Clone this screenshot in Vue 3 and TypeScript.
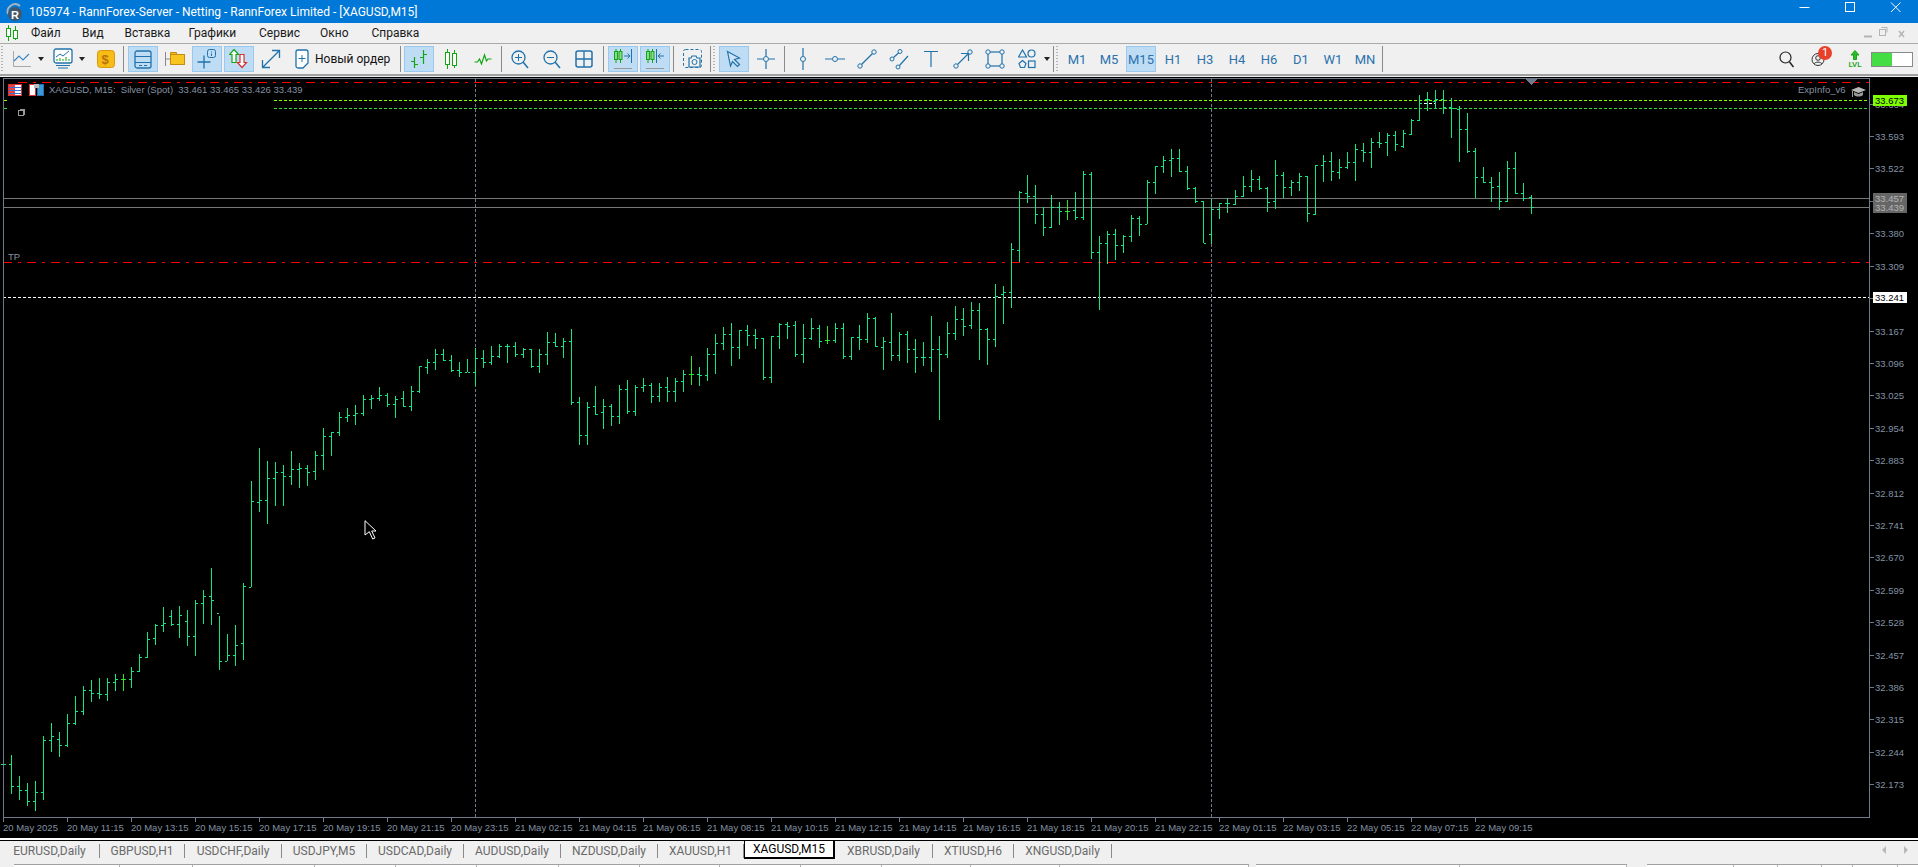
<script setup lang="ts">
type Row = number[];
interface Seg { x0: number; y0: number; rows: Row[] }

const segs: Seg[] = [
  { x0: 3, y0: 620, rows: [
    [405,520,433,433],[405,522,433,499],[468,540,499,511],[489,558,511,544],[483,573,544,517],[348,540,517,361],[309,396,361,349],[336,411,358,376],[282,381,376,310],[228,315,310,274],[198,285,274,211],[180,246,211,220],[174,237,220,223],[174,243,223,187],[162,213,187,178],[162,213,178,178,1],[141,204,178,154],[102,156,154,112],[36,114,112,58],[12,75,55,16],
    [-39,36,16,10],[-30,20,-10,13],[-40,56,13,-15],[-30,80,4,49],[-60,108,49,-50],[-90,12,-50,-70],[-155,15,-70,-60],[-10,150,-20,124],[42,124,124,106],[15,138,106,76],[-110,120,70,-100]
  ] },
  { x0: 251, y0: 430, rows: [
    [153,471,471,214],[54,246,217,211],[93,282,211,145],[96,228,145,127],[105,228,127,139],[63,165,139,118],[99,174,118,115],[105,168,115,127],[63,150,124,76]
  ] },
  { x0: 323, y0: 330, rows: [
    [294,420,376,319],[307,378,319,307],[246,320,307,262],[234,276,262,256],[225,285,256,250],[195,258,250,208],[195,237,208,205],[171,213,205,196],[189,231,196,223],[198,264,223,208],[183,231,205,229],[168,243,229,184],[108,189,184,108],[87,132,112,97],[57,120,97,73],[57,93,73,91],[75,126,91,121],[96,141,121,127],[87,127,127,127],[54,168,127,85],[60,114,85,97],[48,105,97,79],[42,84,79,49],[42,99,49,49],[36,81,49,73],[54,84,73,58],[57,114,58,109],[57,129,109,73],[6,105,73,37],[9,51,37,49],[24,84,49,34],[-3,225,34,217],[201,345,217,316],[216,345,316,232],[168,255,229,253],[207,297,247,229],[222,288,229,259],[165,282,259,178],[150,252,178,244],[165,258,244,172]
  ] },
  { x0: 643, y0: 280, rows: [
    [294,336,322,316],[309,369,316,349],[309,366,349,322],[291,366,322,334],[294,366,334,304],[270,336,304,283],[228,315,283,283,1],[261,318,283,286],[204,303,286,223],[162,282,223,190],[141,210,190,163],[129,258,163,202],[151,237,202,151],[135,198,151,166],[147,207,166,175],[175,300,175,292],[168,309,292,169],[129,207,169,133],[126,177,133,139],[123,231,136,223],[132,249,223,175],[114,180,175,145],[135,204,145,184],[138,192,181,181,1],[129,189,181,145],[129,237,145,229],[172,240,229,172],[135,210,172,178],[99,189,178,115],[111,201,115,199],[171,270,202,184],[99,243,187,226],[156,243,226,163],[153,249,163,208],[177,279,208,232],[186,258,232,232],[108,276,232,208],[168,420,208,223],[126,234,223,160],[78,180,160,118],[84,168,118,139],[66,147,136,91],[69,240,91,148],[144,255,148,178],[12,201,178,49]
  ] },
  { x0: 1003, y0: 140, rows: [
    [438,552,463,457],[309,504,457,328],[153,366,331,157],[105,189,160,169],[135,252,169,223],[202,288,223,262],[165,264,262,202],[186,255,202,214],[180,240,214,214,1],[156,240,211,232],[93,240,232,103],[96,357,103,337],[288,510,337,310],[273,372,310,283],[267,360,283,316],[285,339,316,289],[225,306,289,235],[228,288,235,253],[121,253,253,127],[78,162,127,79],[48,99,79,61],[27,111,61,55],[27,96,55,93],[78,151,93,145],[141,189,145,184],[184,311,184,310],[177,312,283,208],[190,237,208,190],[174,219,190,190],[150,195,193,169],[108,171,169,139],[90,156,139,118],[108,151,118,145],[141,216,145,187],[60,207,184,106],[96,174,106,142],[120,168,142,127],[99,153,127,109],[108,246,109,220],[75,225,222,76],[45,126,76,64],[36,123,64,94],[57,117,97,82],[36,87,82,67]
  ] },
  { x0: 1355, y0: 75, rows: [
    [207,318,262,222],[205,262,226,232],[189,279,232,202],[171,219,202,204],[175,243,202,180],[168,228,180,208],[165,219,213,175],[132,180,177,135],[60,138,135,84],[51,108,72,72],[45,102,78,72],[45,117,72,97],[69,189,97,100],[93,261,103,162],[114,234,162,230],[219,369,228,307],[276,324,307,322],[306,381,322,337],[291,405,335,380],[258,381,380,280],[231,357,280,355],[324,378,355,370],[360,417,368,397]
  ] }
];

let upPath = "";
let flatPath = "";
for (const s of segs) {
  s.rows.forEach((r, i) => {
    const x = s.x0 + i * 8;
    const py = (v: number) => Math.floor(s.y0 + v / 3);
    const h = py(r[0]), l = py(r[1]), o = py(r[2]), c = py(r[3]);
    const d = `M${x} ${h}h1v${Math.max(1, l - h)}h-1zM${x - 2} ${o}h2v1h-2zM${x + 1} ${c}h2v1h-2z`;
    if (r[4]) flatPath += d; else upPath += d;
  });
}

const headerLine = "XAGUSD, M15:  Silver (Spot)  33.461 33.465 33.426 33.439";

const prices = ["33.664","33.593","33.522","33.451","33.380","33.309","33.238","33.167","33.096","33.025","32.954","32.883","32.812","32.741","32.670","32.599","32.528","32.457","32.386","32.315","32.244","32.173"];
const priceTicks = prices.map((p, i) => ({ p, y: Math.round(103.6 + i * 32.415) }));

const times = ["20 May 2025","20 May 11:15","20 May 13:15","20 May 15:15","20 May 17:15","20 May 19:15","20 May 21:15","20 May 23:15","21 May 02:15","21 May 04:15","21 May 06:15","21 May 08:15","21 May 10:15","21 May 12:15","21 May 14:15","21 May 16:15","21 May 18:15","21 May 20:15","21 May 22:15","22 May 01:15","22 May 03:15","22 May 05:15","22 May 07:15","22 May 09:15"];
const timeTicks = times.map((t, i) => ({ t, x: 3 + i * 64 }));

const priceTags = [
  { t: "33.673", y: 95, h: 11, bg: "#7fff00", fg: "#000000" },
  { t: "33.457", y: 193, h: 11, bg: "#666666", fg: "#b4b4b4" },
  { t: "33.439", y: 202, h: 11, bg: "#666666", fg: "#b4b4b4" },
  { t: "33.241", y: 292, h: 11, bg: "#ffffff", fg: "#000000" }
];

const menu = [
  { t: "Файл", w: 51 }, { t: "Вид", w: 42.5 }, { t: "Вставка", w: 64 }, { t: "Графики", w: 70.5 },
  { t: "Сервис", w: 61 }, { t: "Окно", w: 51.5 }, { t: "Справка", w: 60 }
];

const tabs = [
  { t: "EURUSD,Daily", w: 100 }, { t: "GBPUSD,H1", w: 85 }, { t: "USDCHF,Daily", w: 97 }, { t: "USDJPY,M5", w: 85 },
  { t: "USDCAD,Daily", w: 97 }, { t: "AUDUSD,Daily", w: 97 }, { t: "NZDUSD,Daily", w: 97 }, { t: "XAUUSD,H1", w: 86 },
  { t: "XAGUSD,M15", w: 91, on: true }, { t: "XBRUSD,Daily", w: 98 }, { t: "XTIUSD,H6", w: 81 }, { t: "XNGUSD,Daily", w: 98 }
];

const periods = ["M1","M5","M15","H1","H3","H4","H6","D1","W1","MN"];

const strips = [
  { left: 14, cols: [106,73,122,81,81,82,81,80,81,81,89,89,189] },
  { left: 7, cols: [204,167] },
  { left: 20, cols: [87,44,44,31,45,27] }
];
</script>

<template>
  <div class="app">
    <header class="title">
      <svg class="logo" width="18" height="20" viewBox="0 0 18 20">
        <path d="M3 12A7.500 7.500 0 0 1 15 4" fill="none" stroke="#a8b4c0" stroke-width="2" />
        <circle cx="10" cy="12" r="7" fill="#41586c" />
        <text x="6" y="17" class="logo-r">R</text>
      </svg>
      <span class="title-text">105974 - RannForex-Server - Netting - RannForex Limited - [XAGUSD,M15]</span>
      <div class="win">
        <svg width="120" height="23" viewBox="0 0 120 23">
          <path d="M2.500 7.500h10" stroke="#fff" />
          <rect x="48.500" y="2.500" width="9" height="9" fill="none" stroke="#fff" />
          <path d="M94 2.500l9.500 9.500M103.500 2.500L94 12" stroke="#fff" />
        </svg>
      </div>
    </header>

    <nav class="menu">
      <svg class="menu-ico" width="14" height="16" viewBox="0 0 14 16">
        <path d="M3.500 0v16M10.500 1v14" stroke="#13a613" />
        <rect x="1.500" y="3.500" width="4" height="8" fill="#fff" stroke="#13a613" />
        <rect x="8.500" y="5.500" width="4" height="8" fill="#fff" stroke="#13a613" />
      </svg>
      <span v-for="m in menu" :key="m.t" class="menu-item" :style="{ width: m.w + 'px' }">{{ m.t }}</span>
      <svg class="doc-ctl" width="48" height="14" viewBox="0 0 48 14">
        <path d="M0 10.500h8" stroke="#b4b4b4" stroke-width="2" />
        <rect x="15.500" y="3.500" width="6" height="6" fill="none" stroke="#b4b4b4" />
        <path d="M17.500 1.500h5.500v5" fill="none" stroke="#b4b4b4" />
        <path d="M35 5l5 6M40 5l-5 6" stroke="#b4b4b4" stroke-width="1.500" />
      </svg>
    </nav>

    <div class="tools">
      <i class="grip"></i>
      <div class="dd w36">
        <svg width="20" height="20" viewBox="0 0 20 20"><path d="M.5 2v15.500H18" fill="none" stroke="#a8a8a8" /><path d="M1 12l5-5 4 4 6-6" fill="none" stroke="#3d86c0" stroke-width="1.200" /></svg>
        <b class="caret"></b>
      </div>
      <div class="dd w40">
        <svg width="21" height="22" viewBox="0 0 21 22"><rect x="1" y="1" width="18" height="14" rx="2" fill="#fff" stroke="#2072ab" stroke-width="1.300" /><path d="M3 9l4-3 3 2 6-5" fill="none" stroke="#2072ab" /><path d="M4 13v-2M7 13v-3M10 13v-2M13 13V9M16 13v-2" stroke="#13a613" /><path d="M3 17.500h14M5 20h10" stroke="#2072ab" /></svg>
        <b class="caret"></b>
      </div>
      <div class="tb">
        <svg width="18" height="18" viewBox="0 0 18 18"><rect x=".5" y=".5" width="17" height="17" rx="3" fill="#f7bc16" stroke="#d99a10" /><text x="4.500" y="14" class="coin">$</text></svg>
      </div>
      <i class="sep ml0 mr2"></i>
      <div class="tb on">
        <svg width="18" height="19" viewBox="0 0 18 19"><rect x="1" y="1" width="16" height="17" rx="2" fill="none" stroke="#2072ab" stroke-width="1.300" /><path d="M1 6.500h16M1 12.500h16M5 15.500h3M10 15.500h3" stroke="#2072ab" /></svg>
      </div>
      <div class="tb">
        <svg width="20" height="18" viewBox="0 0 20 18"><path d="M.5 2v14M1 9h5" stroke="#8a8a8a" /><path d="M5.500 4.500V2.500h6v2" fill="#f7bc16" stroke="#c48c10" /><rect x="5.500" y="4.500" width="14" height="10" fill="#f7c51e" stroke="#c48c10" /></svg>
      </div>
      <div class="tb on">
        <svg width="20" height="20" viewBox="0 0 20 20"><path d="M7 6.500v13M.5 13h13" stroke="#2072ab" stroke-width="1.300" /><rect x="10.500" y=".5" width="8" height="8" rx="2" fill="none" stroke="#2072ab" /><path d="M14.500 2.500v1M14.500 4.500v2.500" stroke="#2072ab" /></svg>
      </div>
      <div class="tb on">
        <svg width="20" height="20" viewBox="0 0 20 20"><path d="M5 .5l4.500 5H7v8H3v-8H.5z" fill="#fff" stroke="#13a613" stroke-width="1.200" /><path d="M13 18.500l4.500-5H15v-8h-4v8H8.500z" fill="#fff" stroke="#d83030" stroke-width="1.200" /></svg>
      </div>
      <div class="tb">
        <svg width="20" height="20" viewBox="0 0 20 20"><path d="M1.500 18.500L18.500 1.500M11 1.500h7.500V9M1.500 11v7.500H9" fill="none" stroke="#2072ab" stroke-width="1.300" /></svg>
      </div>
      <div class="order">
        <svg width="15" height="20" viewBox="0 0 15 20"><path d="M1 3a2 2 0 0 1 2-2h8a2 2 0 0 1 2 2v11l-5 5H3a2 2 0 0 1-2-2z" fill="#fff" stroke="#2072ab" stroke-width="1.300" /><path d="M7 6v7M3.500 9.500h7" stroke="#2072ab" /></svg>
        <span>Новый ордер</span>
      </div>
      <i class="sep ml2 mr1"></i>
      <div class="tb on">
        <svg width="18" height="20" viewBox="0 0 18 20"><path d="M4.500 8v11M1 12.500h3M5 15.500h3M13.500 1v14M10 8.500h3M14 5.500h3" stroke="#13a613" stroke-width="1.200" /></svg>
      </div>
      <div class="tb">
        <svg width="14" height="20" viewBox="0 0 14 20"><path d="M3.500 0v20M10.500 1v18" stroke="#13a613" /><rect x="1.500" y="3.500" width="4" height="12" fill="#fff" stroke="#13a613" /><rect x="8.500" y="4.500" width="4" height="12" fill="#fff" stroke="#13a613" /></svg>
      </div>
      <div class="tb">
        <svg width="18" height="12" viewBox="0 0 18 12"><path d="M.5 9h3l2-3 2 5 3-9 2 6 1.500-2h3.500" fill="none" stroke="#13a613" stroke-width="1.200" /></svg>
      </div>
      <i class="sep ml1 mr1"></i>
      <div class="tb">
        <svg width="18" height="19" viewBox="0 0 18 19"><circle cx="7.500" cy="7.500" r="6.500" fill="none" stroke="#2072ab" stroke-width="1.300" /><path d="M4 7.500h7M7.500 4v7" stroke="#2072ab" /><path d="M12 12l5 6" stroke="#2072ab" stroke-width="1.500" /></svg>
      </div>
      <div class="tb">
        <svg width="18" height="19" viewBox="0 0 18 19"><circle cx="7.500" cy="7.500" r="6.500" fill="none" stroke="#2072ab" stroke-width="1.300" /><path d="M4 7.500h7" stroke="#2072ab" /><path d="M12 12l5 6" stroke="#2072ab" stroke-width="1.500" /></svg>
      </div>
      <div class="tb">
        <svg width="18" height="18" viewBox="0 0 18 18"><rect x="1" y="1" width="16" height="16" rx="2" fill="none" stroke="#2072ab" stroke-width="1.500" /><path d="M9 1v16M1 9h16" stroke="#2072ab" stroke-width="1.300" /></svg>
      </div>
      <i class="sep ml2 mr2"></i>
      <div class="tb on">
        <svg width="20" height="22" viewBox="0 0 20 22"><path d="M3 1v14M7.500 1v14" stroke="#13a613" /><rect x="1.500" y="3.500" width="3" height="8" fill="#8fd88f" stroke="#13a613" /><rect x="6" y="3.500" width="3" height="8" fill="#8fd88f" stroke="#13a613" /><path d="M11 8h6M14.500 5.500L17 8l-2.500 2.500M18.500 1v14" fill="none" stroke="#2072ab" /><path d="M1 20.500h18" stroke="#9a9a9a" /></svg>
      </div>
      <div class="tb on">
        <svg width="20" height="22" viewBox="0 0 20 22"><path d="M3 1v14M7.500 1v14" stroke="#13a613" /><rect x="1.500" y="3.500" width="3" height="8" fill="#8fd88f" stroke="#13a613" /><rect x="6" y="3.500" width="3" height="8" fill="#8fd88f" stroke="#13a613" /><path d="M11.500 1v14M13 8h6M15.500 5.500L13 8l2.500 2.500" fill="none" stroke="#2072ab" /><path d="M1 20.500h18" stroke="#9a9a9a" /></svg>
      </div>
      <i class="sep ml1 mr2"></i>
      <div class="tb">
        <svg width="20" height="20" viewBox="0 0 20 20"><rect x=".5" y=".5" width="18" height="18" rx="2" fill="none" stroke="#2072ab" stroke-dasharray="3 2" /><path d="M6 18V9h2l1-2h4l1 2h3v9z" fill="#f0f0f0" stroke="#2072ab" stroke-width="1.200" /><circle cx="11.500" cy="13" r="2.500" fill="none" stroke="#2072ab" /></svg>
      </div>
      <i class="sep"></i>
      <i class="grip mr2"></i>
      <div class="tb on">
        <svg width="16" height="18" viewBox="0 0 16 18"><path d="M1.500 1.500l12 6.500-5 1.500 5 5-2 2-5-5-2 4.500z" fill="#cfe2f3" stroke="#2072ab" stroke-width="1.200" /></svg>
      </div>
      <div class="tb">
        <svg width="18" height="20" viewBox="0 0 18 20"><path d="M9 0v7M9 13v7M0 10h6M12 10h6" stroke="#2072ab" stroke-width="1.200" /><circle cx="9" cy="10" r="2.500" fill="none" stroke="#2072ab" /></svg>
      </div>
      <i class="sep ml1 mr1"></i>
      <div class="tb">
        <svg width="8" height="22" viewBox="0 0 8 22"><path d="M4 0v8M4 14v8" stroke="#2072ab" stroke-width="1.200" /><circle cx="4" cy="11" r="2.500" fill="none" stroke="#2072ab" /></svg>
      </div>
      <div class="tb">
        <svg width="20" height="8" viewBox="0 0 20 8"><path d="M0 4h7M13 4h7" stroke="#2072ab" stroke-width="1.200" /><circle cx="10" cy="4" r="2.500" fill="none" stroke="#2072ab" /></svg>
      </div>
      <div class="tb">
        <svg width="20" height="20" viewBox="0 0 20 20"><circle cx="3" cy="17" r="2.200" fill="none" stroke="#2072ab" /><circle cx="17" cy="3" r="2.200" fill="none" stroke="#2072ab" /><path d="M4.500 15.500l11-11" stroke="#2072ab" stroke-width="1.200" /></svg>
      </div>
      <div class="tb">
        <svg width="20" height="21" viewBox="0 0 20 21"><circle cx="3" cy="10" r="2" fill="none" stroke="#2072ab" /><circle cx="11" cy="2.500" r="2" fill="none" stroke="#2072ab" /><circle cx="9" cy="18" r="2" fill="none" stroke="#2072ab" /><path d="M4.500 8.500l5-4.500M10.500 16.500L19 7" stroke="#2072ab" stroke-width="1.200" /></svg>
      </div>
      <div class="tb">
        <svg width="14" height="16" viewBox="0 0 14 16"><path d="M0 .5h14M7 .5V16" stroke="#2072ab" stroke-width="1.200" /></svg>
      </div>
      <div class="tb">
        <svg width="20" height="20" viewBox="0 0 20 20"><circle cx="3" cy="17" r="2.200" fill="none" stroke="#2072ab" /><circle cx="17" cy="3" r="2.200" fill="none" stroke="#2072ab" /><path d="M4.500 15.500l11-11M8 4.500h7.500V12" fill="none" stroke="#2072ab" stroke-width="1.200" /></svg>
      </div>
      <div class="tb">
        <svg width="20" height="20" viewBox="0 0 20 20"><rect x="3" y="3" width="14" height="14" fill="none" stroke="#2072ab" stroke-width="1.200" /><circle cx="3" cy="3" r="2.200" fill="#f0f0f0" stroke="#2072ab" /><circle cx="17" cy="3" r="2.200" fill="#f0f0f0" stroke="#2072ab" /><circle cx="3" cy="17" r="2.200" fill="#f0f0f0" stroke="#2072ab" /><circle cx="17" cy="17" r="2.200" fill="#f0f0f0" stroke="#2072ab" /></svg>
      </div>
      <div class="tb">
        <svg width="18" height="20" viewBox="0 0 18 20"><path d="M4.500 1L8.500 8H.5z" fill="none" stroke="#2072ab" stroke-width="1.200" /><circle cx="13.500" cy="4.500" r="3.500" fill="none" stroke="#2072ab" stroke-width="1.200" /><path d="M4.500 11.500l3.500 3-1.500 4h-4l-1.500-4z" fill="none" stroke="#2072ab" stroke-width="1.200" /><rect x="10.500" y="12" width="6.500" height="6.500" fill="none" stroke="#2072ab" stroke-width="1.200" /></svg>
      </div>
      <div class="caret-box"><b class="caret"></b></div>
      <i class="sep"></i>
      <i class="grip mr2"></i>
      <div v-for="p in periods" :key="p" class="tb per" :class="{ on: p === 'M15' }">{{ p }}</div>
      <i class="sep"></i>
      <div class="status">
        <svg width="16" height="17" viewBox="0 0 16 17"><circle cx="6.500" cy="6.500" r="5.500" fill="none" stroke="#222" stroke-width="1.200" /><path d="M10.500 11l4 5" stroke="#222" stroke-width="1.500" /></svg>
        <div class="profile">
          <svg width="14" height="15" viewBox="0 0 14 15"><circle cx="7" cy="7.500" r="6" fill="none" stroke="#333" /><circle cx="7" cy="6" r="2.300" fill="none" stroke="#333" /><path d="M3 12c1-2.500 7-2.500 8 0" fill="none" stroke="#333" /></svg>
          <span class="badge">1</span>
        </div>
        <div class="lvl">
          <svg width="10" height="10" viewBox="0 0 10 10"><path d="M5 .5L9 5H6.500v4.500h-3V5H1z" fill="#2dbb2d" stroke="#13a613" /></svg>
          <span>LVL</span>
        </div>
        <div class="switch"><i></i></div>
      </div>
    </div>

    <main class="chart">
      <svg width="1918" height="761" viewBox="0 77 1918 761" class="chart-svg">
        <g shape-rendering="crispEdges">
          <path d="M475.500 79V817M1211.500 79V817" stroke="#6f7b8c" stroke-dasharray="3 2" />
          <path d="M274 100.500H1870M4 100.500h3" stroke="#7fff00" stroke-dasharray="3 2" />
          <path d="M274 108.500H1870M4 108.500h3" stroke="#33dd33" stroke-dasharray="3 2" />
          <path d="M3 198.500H1870M3 207.500H1870" stroke="#777777" />
          <path d="M18 82.500H1870" stroke="#ff0000" stroke-dasharray="9 6 3 6" />
          <path d="M3 262.500H1870" stroke="#ff0000" stroke-dasharray="9 6 3 6" />
          <path d="M3 297.500H1870" stroke="#ffffff" stroke-dasharray="3 2" />
          <path d="M1419 103.500h16" stroke="#ffffff" stroke-dasharray="3 2" />
          <path :d="upPath" fill="#14e884" />
          <path :d="flatPath" fill="#2ee81e" />
          <path d="M3.500 817V78.500H1869.500V817.500H3.500" fill="none" stroke="#6f7b8c" />
          <path v-for="t in priceTicks" :key="t.p" :d="`M1870 ${t.y + 0.5}h4`" stroke="#6f7b8c" />
          <path v-for="t in timeTicks" :key="t.t" :d="`M${t.x + 0.5} 817v5`" stroke="#6f7b8c" />
          <path d="M1526 79h11l-5.500 6z" fill="#6f7b8c" />
        </g>

        <text x="49" y="93" class="t">{{ headerLine }}</text>
        <text x="8" y="260" class="t">TP</text>
        <text x="1798" y="93" class="t">ExpInfo_v6</text>

        <g v-for="t in priceTicks" :key="t.p + 'l'"><text x="1875" :y="t.y + 3.5" class="t">{{ t.p }}</text></g>
        <g v-for="t in timeTicks" :key="t.t + 'l'"><text :x="t.x" y="831" class="t">{{ t.t }}</text></g>

        <g v-for="g in priceTags" :key="g.t">
          <rect x="1873" :y="g.y" width="34" :height="g.h" :fill="g.bg" />
          <text x="1875" :y="g.y + 9" class="t" :style="{ fill: g.fg }">{{ g.t }}</text>
        </g>

        <!-- header icons -->
        <g shape-rendering="crispEdges">
          <rect x="8.500" y="84.500" width="13" height="11" fill="#fff" stroke="#e03030" />
          <rect x="9" y="85" width="6" height="10" fill="#e84040" />
          <path d="M9 87.500h12M9 90.500h12M9 93.500h12" stroke="#3a6fd8" />
          <rect x="29.500" y="84.500" width="6" height="11" fill="#fff" stroke="#e03030" />
          <rect x="37.500" y="84.500" width="6" height="11" fill="#3a9ad8" stroke="#2a6fb0" />
          <rect x="34" y="84" width="5" height="4" fill="#bbbbbb" />
          <path d="M19.500 109.500h5v5M18.500 110.500h5v5h-5z" fill="none" stroke="#9a9a9a" />
        </g>
        <g>
          <path d="M1851 90l7.500-3 7.500 3-7.500 3z" fill="#b8b8b8" />
          <path d="M1854 92v3c2 2 7 2 9 0v-3l-4.500 2z" fill="#9a9a9a" />
          <path d="M1852.500 91v6" stroke="#9a9a9a" />
        </g>
        <path d="M365 520.700V535L369.300 531.700L372.700 539L375 538L371.700 531H376Z" fill="#000" stroke="#fff" stroke-width="1" />
      </svg>
    </main>

    <div class="tabs">
      <div v-for="t in tabs" :key="t.t" class="tab" :class="{ on: t.on }" :style="{ width: t.w + 'px' }">{{ t.t }}</div>
      <svg class="scroll" width="26" height="8" viewBox="0 0 26 8">
        <path d="M4 0v8L0 4zM22 0v8l4-4z" fill="#b8b8b8" />
      </svg>
    </div>

    <footer class="foot">
      <div v-for="(s, i) in strips" :key="i" class="strip" :class="'s' + i" :style="{ marginLeft: s.left + 'px' }">
        <span v-for="(c, j) in s.cols" :key="j" class="cell" :style="{ width: c + 'px' }"></span>
      </div>
    </footer>
  </div>
</template>

<style>
html, body { margin: 0; background: #f0f0f0; overflow: hidden; }
</style>

<style scoped>
.app { width: 1918px; height: 867px; display: flex; flex-direction: column; font-family: Roboto, "Liberation Sans", sans-serif; overflow: hidden; background: #f0f0f0; }
.title { height: 23px; background: #0078d7; color: #fff; display: flex; align-items: center; font-size: 12px; flex: none; position: relative; }
.logo { margin-left: 5px; margin-right: 6px; }
.logo-r { font: bold 11px "Liberation Sans", sans-serif; fill: #fff; }
.coin { font: bold 13px "Liberation Sans", sans-serif; fill: #b8720a; }
.title-text { white-space: nowrap; }
.win { margin-left: auto; margin-right: 1px; height: 23px; }
.win svg { display: block; }
.menu { height: 20px; flex: none; display: flex; align-items: center; font-size: 12px; color: #1a1a1a; }
.menu-ico { margin-left: 5px; margin-right: 12px; }
.menu-item { white-space: nowrap; }
.doc-ctl { margin-left: auto; margin-right: 6px; }
.tools { height: 30px; flex: none; display: flex; align-items: center; gap: 2px; padding-left: 1px; border-top: 1px solid #aaaaaa; border-bottom: 2px solid #a0a0a0; box-sizing: content-box; }
.grip { display: block; width: 2px; height: 26px; margin-right: 6px; background: repeating-linear-gradient(to bottom, #b4b4b4 0 1px, transparent 1px 3px); flex: none; }
.grip.mr2 { margin-right: 2px; }
.sep { display: block; width: 1px; height: 26px; background: #8a8a8a; flex: none; }
.ml0 { margin-left: 0; } .ml1 { margin-left: 1px; } .ml2 { margin-left: 2px; }
.mr1 { margin-right: 1px; } .mr2 { margin-right: 2px; }
.tb { width: 30px; height: 26px; box-sizing: border-box; display: flex; align-items: center; justify-content: center; flex: none; border: 1px solid transparent; }
.tb.on { background: #bfdcf5; border-color: #99c9ef; }
.tb svg, .dd svg, .order svg, .status svg { display: block; flex: none; }
.dd { height: 26px; display: flex; align-items: center; flex: none; box-sizing: border-box; }
.w36 { width: 36px; padding-left: 2px; gap: 5px; }
.w40 { width: 40px; padding-left: 4px; gap: 5px; }
.caret { display: block; width: 0; height: 0; border-left: 3.5px solid transparent; border-right: 3.5px solid transparent; border-top: 4px solid #222; flex: none; }
.caret-box { width: 7px; flex: none; }
.order { width: 108px; height: 26px; display: flex; align-items: center; gap: 5px; padding-left: 7px; box-sizing: border-box; font-size: 12px; color: #111; white-space: nowrap; flex: none; }
.per { font-size: 13px; color: #2b72ad; }
.status { margin-left: auto; display: flex; align-items: center; margin-right: 5px; }
.profile { position: relative; width: 14px; height: 15px; margin-left: 16px; }
.badge { position: absolute; left: 7px; top: -6px; width: 14px; height: 14px; border-radius: 50%; background: #e8402a; color: #fff; font-size: 11px; line-height: 14px; text-align: center; }
.lvl { width: 16px; margin-left: 22px; display: flex; flex-direction: column; align-items: center; font-size: 8px; line-height: 9px; color: #13a613; font-weight: 500; }
.switch { width: 42px; height: 15px; margin-left: 8px; box-sizing: border-box; border: 1px solid #8a8a8a; background: #fff; }
.switch i { display: block; width: 20px; height: 100%; background: #44dd44; }
.chart { height: 761px; flex: none; margin-top: 1px; background: #000; border-bottom: 2px solid #fff; }
.chart-svg { display: block; }
.t { font: 9.5px "Liberation Sans", sans-serif; fill: #8492a4; white-space: pre; }
.tabs { height: 18px; flex: none; border-top: 1px solid #000; display: flex; align-items: stretch; font-size: 12px; color: #6a6a6a; position: relative; }
.tab { box-sizing: border-box; display: flex; align-items: center; justify-content: center; white-space: nowrap; border-right: 1px solid #8a8a8a; margin: 3px 0 1px; }
.tab.on { background: #fff; color: #000; border: 1px solid #000; border-top: none; border-bottom-width: 2px; border-right-width: 2px; margin: 0; }
.scroll { position: absolute; right: 10px; top: 5px; }
.foot { flex: 1; padding-top: 5px; display: flex; align-items: flex-start; }
.strip { display: flex; height: 5px; background: #fff; border-top: 1px solid #a0a0a0; }
.cell { display: block; box-sizing: border-box; border-right: 1px solid #b4b4b4; height: 100%; }
</style>
